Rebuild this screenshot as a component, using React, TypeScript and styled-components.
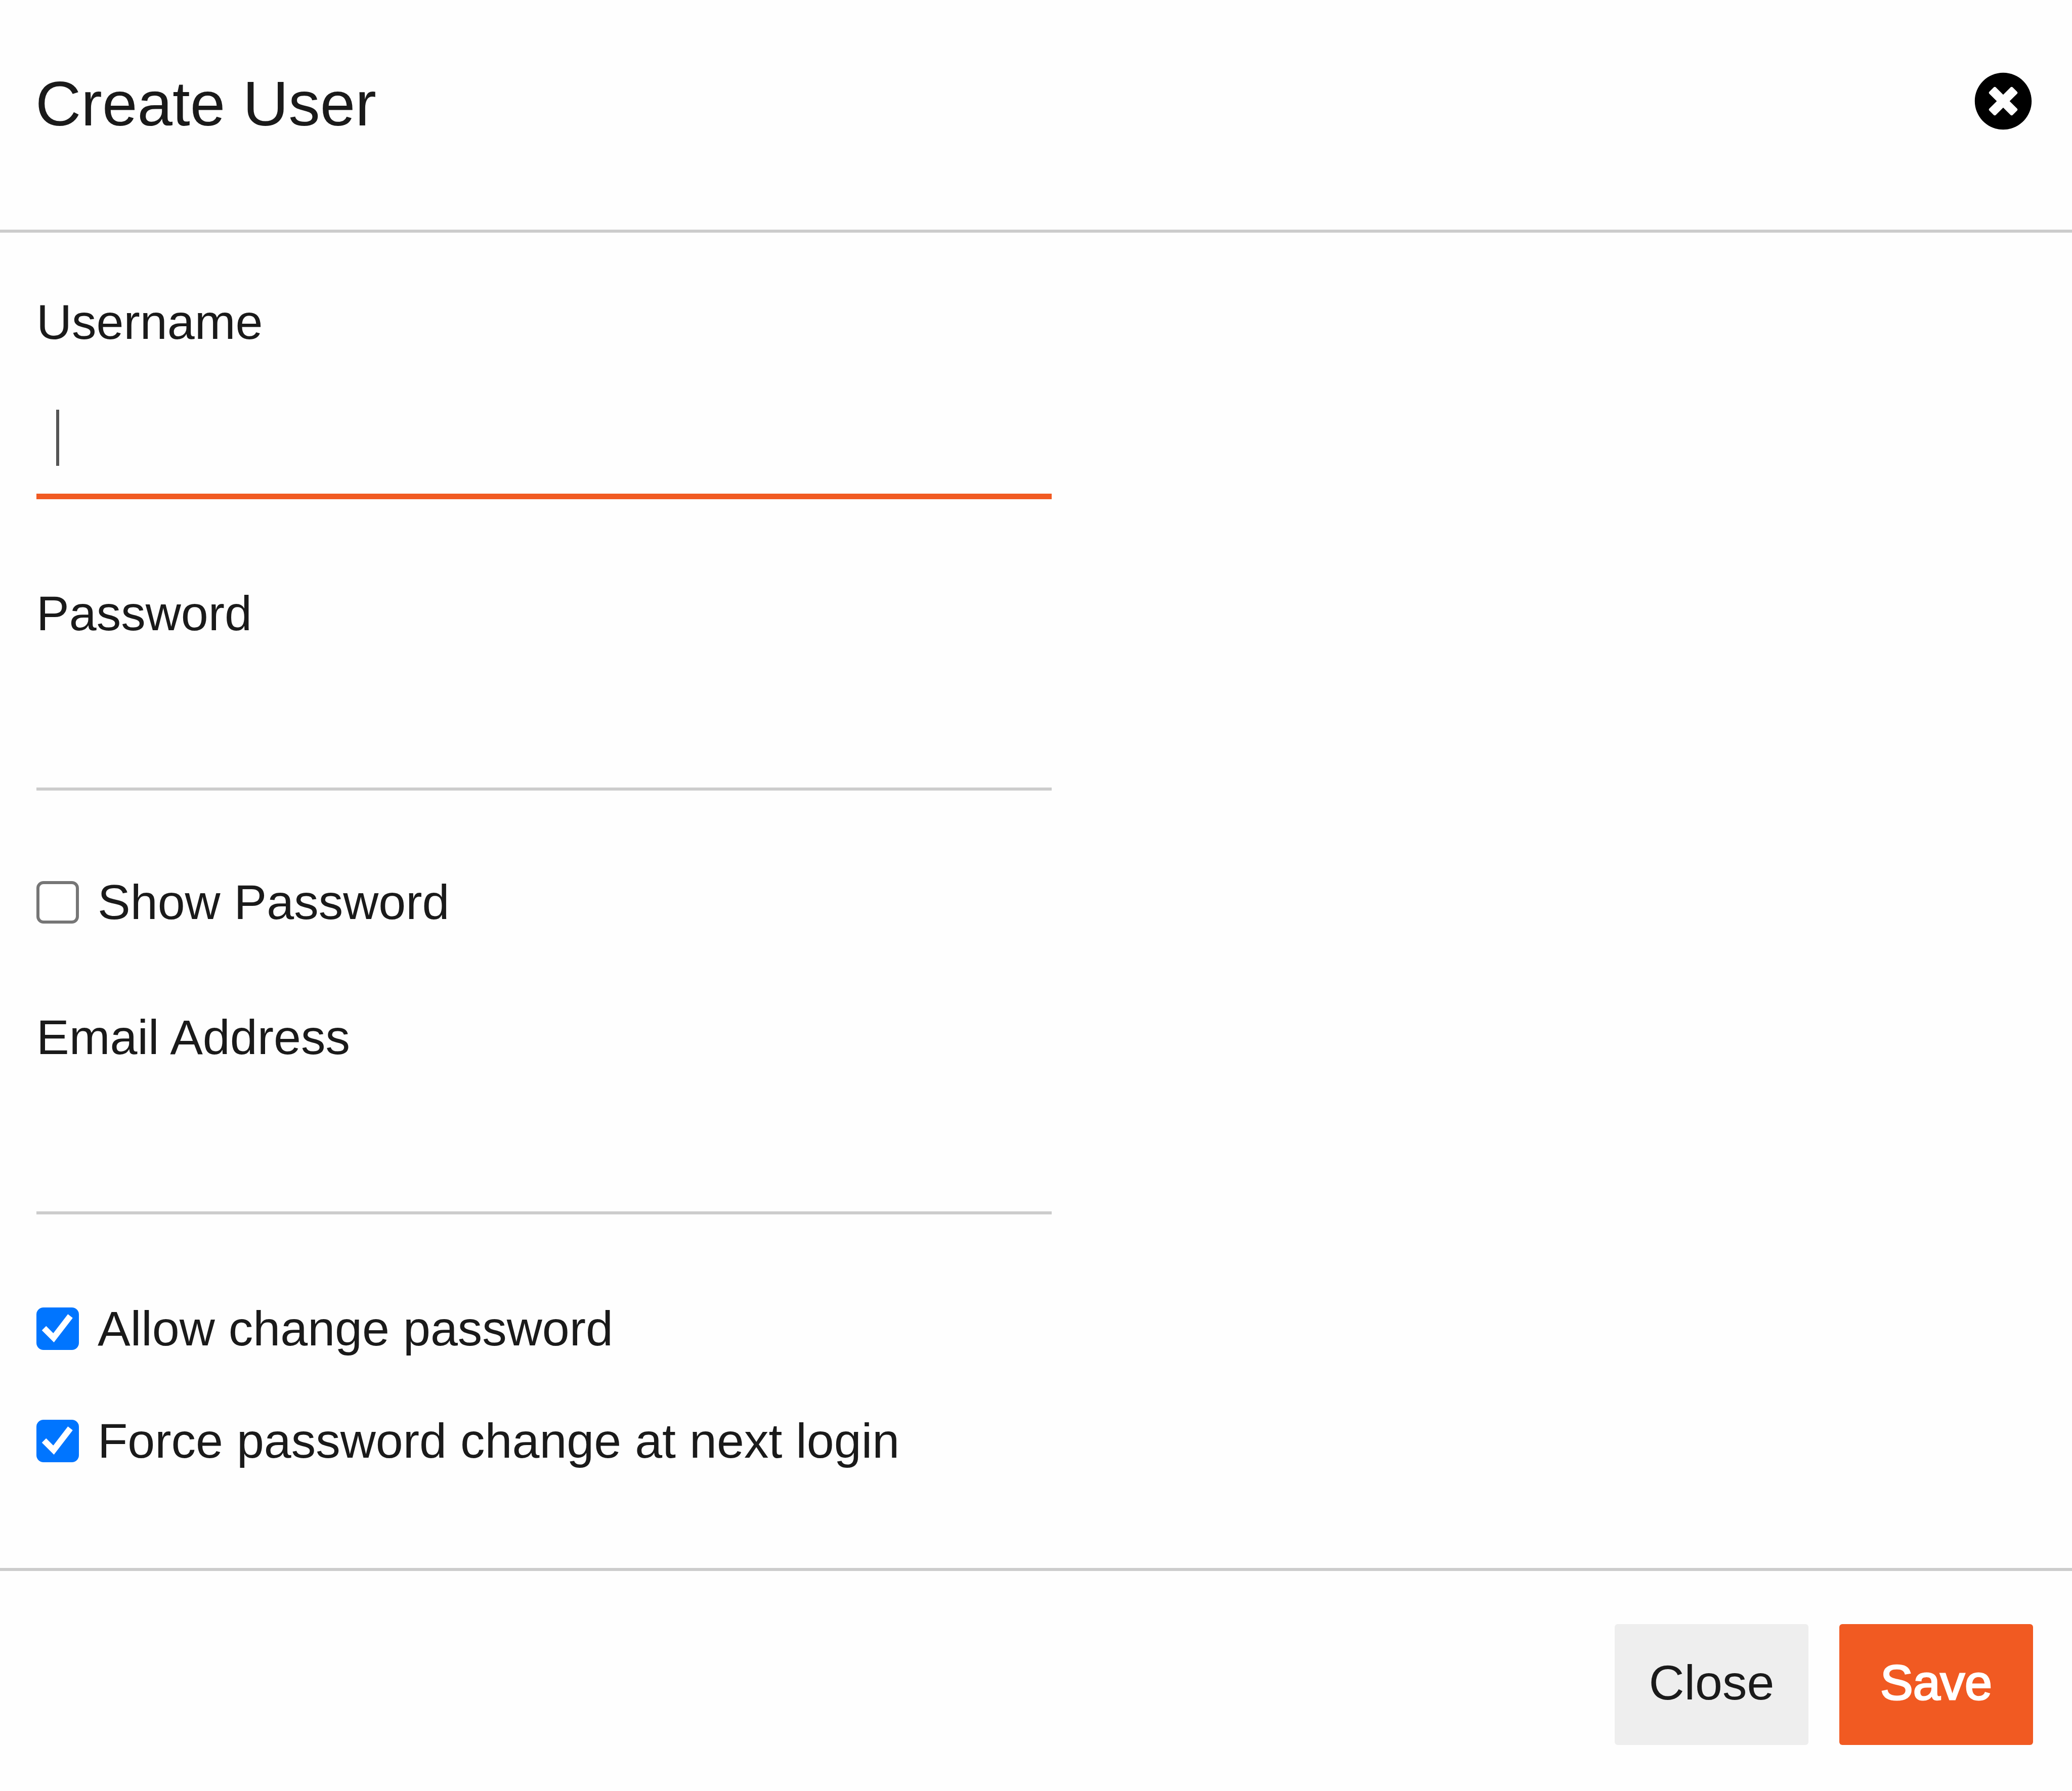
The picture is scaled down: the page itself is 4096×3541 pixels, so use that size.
import React, { useState } from "react";
import styled, { createGlobalStyle } from "styled-components";
import { FaTimesCircle } from "react-icons/fa";

const GlobalStyle = createGlobalStyle`
  *, *::before, *::after { box-sizing: border-box; }
  body {
    margin: 0;
    background: #fefefe;
    color: #1a1a1a;
    font-family: "Liberation Sans", Arial, Helvetica, sans-serif;
    font-size: 97px;
    line-height: 112px;
  }
  button, input { font: inherit; color: inherit; }
`;

const Dialog = styled.form`
  display: flex;
  flex-direction: column;
  min-height: 100vh;
`;

const Header = styled.header`
  display: flex;
  align-items: flex-start;
  justify-content: space-between;
  padding: 142px 78px 186px 70px;
  border-bottom: 6px solid #ccc;
`;

const Title = styled.h1`
  margin: 0;
  font-size: 125px;
  font-weight: 400;
  line-height: 126px;
`;

const IconButton = styled.button`
  display: flex;
  padding: 0;
  border: 0;
  background: none;
  color: #000;
  font-size: 116px;
  cursor: pointer;
`;

const Body = styled.main`
  flex: 1;
  display: flex;
  flex-direction: column;
  align-items: flex-start;
  padding: 121px 72px 195px;
`;

const Field = styled.div<{ $after: number }>`
  display: flex;
  flex-direction: column;
  gap: 62px;
  width: 49vw;
  margin-bottom: ${(p) => p.$after}px;
`;

const InputBox = styled.div`
  position: relative;
  display: flex;
`;

const TextInput = styled.input<{ $active?: boolean }>`
  width: 100%;
  height: 232px;
  padding: 0 38px;
  border: 0;
  border-bottom: ${(p) => (p.$active ? "11px solid #f15a22" : "6px solid #ccc")};
  border-radius: 0;
  outline: none;
  background: transparent;
  caret-color: transparent;
`;

const Caret = styled.span`
  position: absolute;
  left: 39px;
  top: 55px;
  width: 6px;
  height: 111px;
  background: #555;
  pointer-events: none;
`;

const CheckRow = styled.label<{ $after?: number }>`
  display: flex;
  align-items: center;
  gap: 37px;
  margin-bottom: ${(p) => p.$after ?? 0}px;
  cursor: pointer;
`;

const CheckFrame = styled.span`
  position: relative;
  display: flex;
`;

const CheckInput = styled.input`
  appearance: none;
  width: 84px;
  height: 84px;
  margin: 0;
  border: 6px solid #767676;
  border-radius: 14px;
  background: #fff;

  &:checked {
    border-color: #0075ff;
    background: #0075ff;
  }
`;

const Tick = styled.svg`
  position: absolute;
  inset: 0;
  width: 84px;
  height: 84px;
  fill: none;
  stroke: #fff;
  stroke-width: 12;
  pointer-events: none;
`;

const Footer = styled.footer`
  display: flex;
  justify-content: flex-end;
  gap: 61px;
  padding: 105px 77px 92px;
  border-top: 6px solid #ccc;
`;

const Button = styled.button<{ $primary?: boolean }>`
  min-width: 383px;
  height: 239px;
  padding: 0 60px 8px;
  border: 0;
  border-radius: 6px;
  background: ${(p) => (p.$primary ? "#f15a22" : "#eee")};
  color: ${(p) => (p.$primary ? "#fff" : "#1a1a1a")};
  -webkit-text-stroke: ${(p) => (p.$primary ? "3px #fff" : "0")};
  cursor: pointer;
`;

type CheckProps = {
  label: string;
  checked: boolean;
  onChange: (checked: boolean) => void;
  after?: number;
};

function Check({ label, checked, onChange, after }: CheckProps) {
  return (
    <CheckRow $after={after}>
      <CheckFrame>
        <CheckInput
          type="checkbox"
          checked={checked}
          onChange={(e) => onChange(e.target.checked)}
        />
        {checked && (
          <Tick viewBox="0 0 84 84" aria-hidden="true">
            <path d="M15 41 L34 60 L67 17" />
          </Tick>
        )}
      </CheckFrame>
      {label}
    </CheckRow>
  );
}

export default function App() {
  const [username, setUsername] = useState("");
  const [showPassword, setShowPassword] = useState(false);
  const [allowChange, setAllowChange] = useState(true);
  const [forceChange, setForceChange] = useState(true);

  return (
    <>
      <GlobalStyle />
      <Dialog onSubmit={(e) => e.preventDefault()}>
        <Header>
          <Title>Create User</Title>
          <IconButton type="button" aria-label="Close dialog">
            <FaTimesCircle />
          </IconButton>
        </Header>

        <Body>
          <Field $after={170}>
            <label htmlFor="username">Username</label>
            <InputBox>
              <TextInput
                id="username"
                type="text"
                $active
                value={username}
                onChange={(e) => setUsername(e.target.value)}
              />
              {username === "" && <Caret />}
            </InputBox>
          </Field>

          <Field $after={165}>
            <label htmlFor="password">Password</label>
            <InputBox>
              <TextInput id="password" type={showPassword ? "text" : "password"} />
            </InputBox>
          </Field>

          <Check
            label="Show Password"
            checked={showPassword}
            onChange={setShowPassword}
            after={155}
          />

          <Field $after={170}>
            <label htmlFor="email">Email Address</label>
            <InputBox>
              <TextInput id="email" type="email" />
            </InputBox>
          </Field>

          <Check
            label="Allow change password"
            checked={allowChange}
            onChange={setAllowChange}
            after={110}
          />
          <Check
            label="Force password change at next login"
            checked={forceChange}
            onChange={setForceChange}
          />
        </Body>

        <Footer>
          <Button type="button">Close</Button>
          <Button type="submit" $primary>
            Save
          </Button>
        </Footer>
      </Dialog>
    </>
  );
}
